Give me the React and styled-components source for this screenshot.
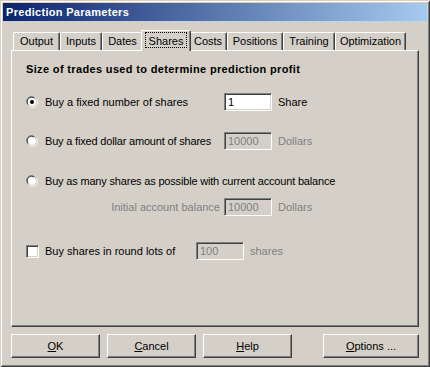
import React from 'react';
import styled, {createGlobalStyle} from 'styled-components';

const Global = createGlobalStyle`
  html, body { margin: 0; padding: 0; background: #d4d0c8; }
  body { font-family: "Liberation Sans", Arial, sans-serif; font-size: 11px; color: #000; }
`;

const Window = styled.div`
  box-sizing: border-box;
  width: 430px;
  height: 367px;
  padding: 3px;
  background: #d4d0c8;
  box-shadow: inset 1px 1px 0 #d4d0c8, inset -1px -1px 0 #404040,
    inset 2px 2px 0 #ffffff, inset -2px -2px 0 #808080;
  display: flex;
  flex-direction: column;
`;

const TitleBar = styled.div`
  height: 18px;
  background: linear-gradient(to right, #0a246a, #a6caf0);
  color: #fff;
  font-weight: bold;
  font-size: 11px;
  letter-spacing: 0.3px;
  line-height: 18px;
  padding-left: 3px;
  white-space: nowrap;
`;

const Body = styled.div`
  padding: 9px 8px 0 8px;
  display: flex;
  flex-direction: column;
`;

const TabStrip = styled.div`
  height: 20px;
  display: flex;
  align-items: flex-end;
  padding-left: 2px;
`;

const Tab = styled.div`
  box-sizing: border-box;
  width: ${p => p.$w}px;
  height: ${p => (p.$active ? 21 : 18)}px;
  margin: ${p => (p.$active ? '0 -2px -1px -2px' : '0')};
  position: relative;
  z-index: ${p => (p.$active ? 2 : 1)};
  background: #d4d0c8;
  border-left: 1px solid #fff;
  border-top: 1px solid #fff;
  border-right: 1px solid #404040;
  box-shadow: inset -1px 0 0 #808080;
  border-top-left-radius: 2px;
  border-top-right-radius: 2px;
  display: flex;
  align-items: flex-start;
  justify-content: center;
  padding-top: ${p => (p.$active ? 1 : 2)}px;
  white-space: nowrap;
`;

const Focus = styled.span`
  box-sizing: border-box;
  width: calc(100% - 6px);
  height: 16px;
  border: 1px dotted #000;
  text-align: center;
  line-height: 14px;
  padding-top: 1px;
`;

const TabText = styled.span`
  line-height: 13px;
`;

const Panel = styled.div`
  box-sizing: border-box;
  height: 277px;
  border-top: 1px solid #fff;
  border-left: 1px solid #fff;
  border-right: 1px solid #404040;
  border-bottom: 1px solid #404040;
  box-shadow: inset -1px -1px 0 #808080;
  padding: 12px 0 0 14px;
  display: flex;
  flex-direction: column;
`;

const Heading = styled.div`
  font-weight: bold;
  letter-spacing: 0.35px;
  height: 13px;
  line-height: 13px;
  white-space: nowrap;
`;

const Row = styled.div`
  display: flex;
  align-items: center;
  height: 18px;
  margin-top: ${p => p.$top}px;
  white-space: nowrap;
`;

const Mark = styled.div`
  width: 19px;
  display: flex;
  align-items: center;
`;

const Label = styled.div`
  width: ${p => (p.$w ? `${p.$w}px` : 'auto')};
  text-align: ${p => (p.$right ? 'right' : 'left')};
  padding-right: ${p => (p.$right ? 4 : 0)}px;
  box-sizing: border-box;
  color: ${p => (p.$disabled ? '#808080' : '#000')};
  line-height: 18px;
  letter-spacing: ${p => (p.$tight ? '-0.18px' : '0')};
`;

const Field = styled.div`
  box-sizing: border-box;
  width: 48px;
  height: 18px;
  background: ${p => (p.$disabled ? '#d4d0c8' : '#fff')};
  color: ${p => (p.$disabled ? '#808080' : '#000')};
  border-top: 1px solid #808080;
  border-left: 1px solid #808080;
  border-right: 1px solid #fff;
  border-bottom: 1px solid #fff;
  box-shadow: inset 1px 1px 0 #404040, inset -1px -1px 0 #d4d0c8;
  padding-left: 3px;
  line-height: 16px;
`;

const Unit = styled.div`
  margin-left: 6px;
  color: ${p => (p.$disabled ? '#808080' : '#000')};
`;

const Buttons = styled.div`
  display: flex;
  margin-top: 7px;
  gap: 7px;
`;

const Button = styled.div`
  box-sizing: border-box;
  width: ${p => p.$w}px;
  height: 24px;
  background: #d4d0c8;
  border-top: 1px solid #fff;
  border-left: 1px solid #fff;
  border-right: 1px solid #404040;
  border-bottom: 1px solid #404040;
  box-shadow: inset -1px -1px 0 #808080;
  display: flex;
  align-items: center;
  justify-content: center;
  margin-left: ${p => (p.$push ? 24 : 0)}px;
`;

const Radio = ({checked}) => (
  <svg width="12" height="12" viewBox="0 0 12 12">
    <path d="M1.5 8.5 A5 5 0 0 1 8.5 1.5" fill="none" stroke="#808080" />
    <path d="M2.5 8.5 A4 4 0 0 1 8.5 2.5" fill="none" stroke="#404040" />
    <circle cx="6" cy="6" r="4" fill="#fff" />
    <path d="M10.5 3.5 A5 5 0 0 1 3.5 10.5" fill="none" stroke="#fff" />
    <path d="M9.5 3.5 A4 4 0 0 1 3.5 9.5" fill="none" stroke="#d4d0c8" />
    {checked && <circle cx="6" cy="6" r="2" fill="#000" />}
  </svg>
);

const CheckBox = styled.div`
  box-sizing: border-box;
  width: 13px;
  height: 13px;
  background: #fff;
  border-top: 1px solid #808080;
  border-left: 1px solid #808080;
  border-right: 1px solid #fff;
  border-bottom: 1px solid #fff;
  box-shadow: inset 1px 1px 0 #404040, inset -1px -1px 0 #d4d0c8;
`;

const tabs = [
  {name: 'Output', w: 47},
  {name: 'Inputs', w: 42},
  {name: 'Dates', w: 41},
  {name: 'Shares', w: 50, active: true},
  {name: 'Costs', w: 38},
  {name: 'Positions', w: 56},
  {name: 'Training', w: 52},
  {name: 'Optimization', w: 71},
];

const App = () => (
  <Window>
    <Global />
    <TitleBar>Prediction Parameters</TitleBar>
    <Body>
      <TabStrip>
        {tabs.map(t => (
          <Tab key={t.name} $w={t.w} $active={t.active}>
            {t.active ? <Focus>{t.name}</Focus> : <TabText>{t.name}</TabText>}
          </Tab>
        ))}
      </TabStrip>
      <Panel>
        <Heading>Size of trades used to determine prediction profit</Heading>

        <Row $top={17}>
          <Mark><Radio checked /></Mark>
          <Label $w={179}>Buy a fixed number of shares</Label>
          <Field>1</Field>
          <Unit>Share</Unit>
        </Row>

        <Row $top={21}>
          <Mark><Radio /></Mark>
          <Label $w={179} $tight>Buy a fixed dollar amount of shares</Label>
          <Field $disabled>10000</Field>
          <Unit $disabled>Dollars</Unit>
        </Row>

        <Row $top={22}>
          <Mark><Radio /></Mark>
          <Label $tight>Buy as many shares as possible with current account balance</Label>
        </Row>

        <Row $top={8}>
          <Label $w={198} $right $disabled>Initial account balance</Label>
          <Field $disabled>10000</Field>
          <Unit $disabled>Dollars</Unit>
        </Row>

        <Row $top={26}>
          <Mark><CheckBox /></Mark>
          <Label $w={151}>Buy shares in round lots of</Label>
          <Field $disabled>100</Field>
          <Unit $disabled>shares</Unit>
        </Row>
      </Panel>
      <Buttons>
        <Button $w={89}><span><u>O</u>K</span></Button>
        <Button $w={89}><span><u>C</u>ancel</span></Button>
        <Button $w={89}><span><u>H</u>elp</span></Button>
        <Button $w={96} $push><span><u>O</u>ptions ...</span></Button>
      </Buttons>
    </Body>
  </Window>
);

export default App;
